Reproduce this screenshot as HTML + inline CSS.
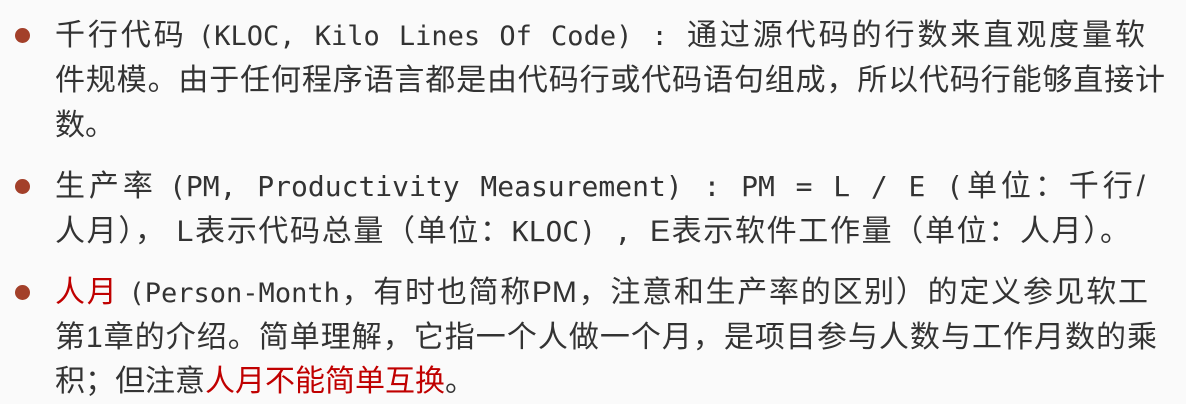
<!DOCTYPE html><html><head><meta charset="utf-8"><style>
body{margin:0;width:1186px;height:402px;background:#fafafa;overflow:hidden;position:relative;font-family:"Liberation Sans","Noto Sans CJK SC",sans-serif;color:#333;font-size:30px}
.l{position:absolute;left:55px;white-space:nowrap;line-height:45px;height:45px}
.j{text-align:justify;text-align-last:justify;text-justify:inter-character}
.m{font-family:"DejaVu Sans Mono","Liberation Mono",monospace;font-size:27px}
.r{color:#c00000}
.b{position:absolute;left:15px;width:15px;height:15px;border-radius:50%;background:#a3402a}
</style></head><body>
<div class="b" style="top:28px"></div>
<div class="b" style="top:179px"></div>
<div class="b" style="top:285px"></div>
<div class="l j" style="top:13px;width:1090px">千行代码 <span class="m">(KLOC, Kilo Lines Of Code) : </span>通过源代码的行数来直观度量软</div>
<div class="l j" style="top:58px;width:1110px">件规模。由于任何程序语言都是由代码行或代码语句组成，所以代码行能够直接计</div>
<div class="l" style="top:103px">数。</div>
<div class="l j" style="top:164px;width:1090px">生产率 <span class="m" style="font-size:28px">(PM, Productivity Measurement) : PM = L / E (</span>单位：千行/</div>
<div class="l j" style="top:209px;width:1075px">人月），&nbsp;L表示代码总量（单位：<span class="m" style="font-size:28px">KLOC) , </span>E表示软件工作量（单位：人月）。</div>
<div class="l j" style="top:270px;width:1093px"><span class="r">人月</span> <span class="m">(Person-Month</span>，有时也简称PM，注意和生产率的区别）的定义参见软工</div>
<div class="l j" style="top:315px;width:1102px">第1章的介绍。简单理解，它指一个人做一个月，是项目参与人数与工作月数的乘</div>
<div class="l" style="top:359px">积；但注意<span class="r">人月不能简单互换</span>。</div>
</body></html>
